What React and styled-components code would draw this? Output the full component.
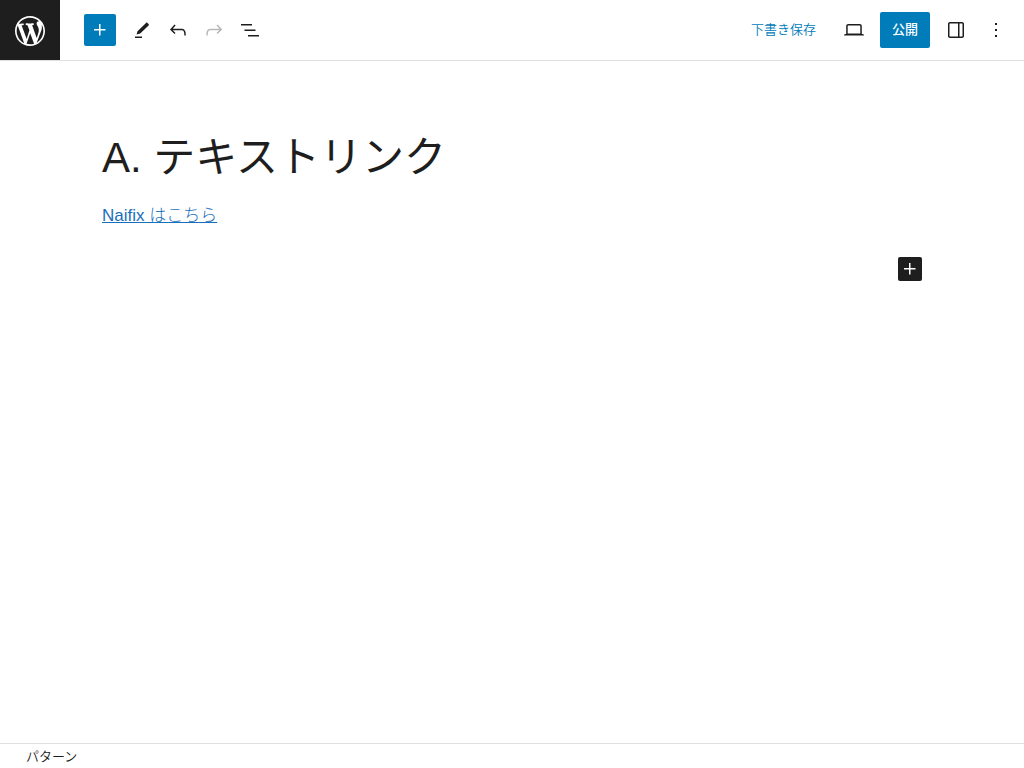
import React, { useState } from "react";
import styled, { createGlobalStyle } from "styled-components";

const ICONS = {
  plus: "M11 12.5V17.5H12.5V12.5H17.5V11H12.5V6H11V11H6V12.5H11Z",
  edit: "M16 4.9c.4-.4 1-.4 1.4 0l1.2 1.2c.4.4.4 1 0 1.4L10.2 15.6 6.6 16.6l.9-3.4L16 4.9zM5 18.5h7V20H5v-1.5z",
  undo: "M18.3 11.7c-.6-.6-1.4-.9-2.3-.9H6.7l2.9-3.3-1.1-1-4.5 5L8.5 16l1-1-2.7-2.7H16c.5 0 .9.2 1.3.5 1 1 1 3.4 1 4.5v.3h1.5v-.2c0-1.5 0-4.3-1.5-5.7z",
  redo: "M15.6 6.5l-1.1 1 2.9 3.3H8c-.9 0-1.7.3-2.3.9-1.4 1.5-1.4 4.2-1.4 5.6v.2h1.5v-.3c0-1.1 0-3.5 1-4.5.3-.3.7-.5 1.3-.5h9.2L14.5 15l1.1 1.1 4.6-4.6-4.6-5z",
  list: "M3 6h11v1.5H3V6Zm3.5 5.5h11V13h-11v-1.5ZM21 17H10v1.5h11V17Z",
  desktop:
    "M20.5 16h-.7V8c0-1.1-.9-2-2-2H6.2c-1.1 0-2 .9-2 2v8h-.7c-.8 0-1.5.7-1.5 1.5h20c0-.8-.7-1.5-1.5-1.5zM5.7 8c0-.3.2-.5.5-.5h11.6c.3 0 .5.2.5.5v7.6H5.7V8z",
  drawer:
    "M18 4H6c-1.1 0-2 .9-2 2v12c0 1.1.9 2 2 2h12c1.1 0 2-.9 2-2V6c0-1.1-.9-2-2-2zm-4 14.5H6c-.3 0-.5-.2-.5-.5V6c0-.3.2-.5.5-.5h8v13zm4.5-.5c0 .3-.2.5-.5.5h-2.5v-13H18c.3 0 .5.2.5.5v12z",
  more: "M13 19h-2v-2h2v2zm0-6h-2v-2h2v2zm0-6h-2V5h2v2z",
};

const WP_LOGO =
  "M20 10c0-5.51-4.49-10-10-10C4.48 0 0 4.49 0 10c0 5.52 4.48 10 10 10 5.51 0 10-4.48 10-10zM7.78 15.37L4.37 6.22c.55-.02 1.17-.08 1.17-.08.5-.06.44-1.13-.06-1.11 0 0-1.45.11-2.37.11-.18 0-.37 0-.58-.01C4.12 2.69 6.87 1.11 10 1.11c2.33 0 4.45.87 6.05 2.34-.68-.11-1.65.39-1.65 1.58 0 .74.45 1.36.9 2.1.35.61.55 1.36.55 2.46 0 1.49-1.4 5-1.4 5l-3.03-8.37c.54-.02.82-.17.82-.17.5-.05.44-1.25-.06-1.22 0 0-1.44.12-2.38.12-.87 0-2.33-.12-2.33-.12-.5-.03-.56 1.2-.06 1.22l.92.08 1.26 3.41zM17.41 10c.24-.64.74-1.87.43-4.25.7 1.29 1.05 2.71 1.05 4.25 0 3.29-1.73 6.24-4.4 7.78.97-2.59 1.94-5.2 2.92-7.78zM6.1 18.09C3.12 16.65 1.11 13.53 1.11 10c0-1.3.23-2.48.72-3.59C3.25 10.3 4.67 14.2 6.1 18.09zm4.03-6.63l2.58 6.98c-.86.29-1.76.45-2.71.45-.79 0-1.57-.11-2.29-.33.81-2.38 1.62-4.74 2.42-7.1z";

function Icon({ name }) {
  return (
    <svg width="24" height="24" viewBox="0 0 24 24" fill="currentColor" aria-hidden="true">
      <path d={ICONS[name]} />
    </svg>
  );
}

function App() {
  const [sidebar, setSidebar] = useState(false);

  return (
    <Editor>
      <GlobalStyle />
      <Header>
        <HomeLink href="#" aria-label="投稿を表示">
          <svg width="36" height="36" viewBox="-2 -2 24 24" fill="currentColor" aria-hidden="true">
            <path d={WP_LOGO} />
          </svg>
        </HomeLink>
        <DocumentTools>
          <InserterButton aria-label="ブロック挿入ツールを切り替え">
            <Icon name="plus" />
          </InserterButton>
          <ToolGroup>
            <IconButton aria-label="ツール">
              <Icon name="edit" />
            </IconButton>
            <IconButton aria-label="元に戻す">
              <Icon name="undo" />
            </IconButton>
            <IconButton aria-label="やり直す" disabled>
              <Icon name="redo" />
            </IconButton>
            <IconButton aria-label="リスト表示">
              <Icon name="list" />
            </IconButton>
          </ToolGroup>
        </DocumentTools>
        <Settings>
          <TextButton>下書き保存</TextButton>
          <IconButton aria-label="プレビュー">
            <Icon name="desktop" />
          </IconButton>
          <TextButton $primary>公開</TextButton>
          <MenuGroup>
            <IconButton
              aria-label="設定"
              aria-pressed={sidebar}
              onClick={() => setSidebar(!sidebar)}
            >
              <Icon name="drawer" />
            </IconButton>
            <IconButton aria-label="オプション">
              <Icon name="more" />
            </IconButton>
          </MenuGroup>
        </Settings>
      </Header>
      <Canvas>
        <Post>
          <PostTitle>A. テキストリンク</PostTitle>
          <Paragraph>
            <a href="#">Naifix はこちら</a>
          </Paragraph>
          <AppenderRow>
            <Appender aria-label="ブロックを追加">
              <Icon name="plus" />
            </Appender>
          </AppenderRow>
        </Post>
      </Canvas>
      <Footer>パターン</Footer>
    </Editor>
  );
}

export default App;

const GlobalStyle = createGlobalStyle`
  * {
    box-sizing: border-box;
  }
  body {
    margin: 0;
    background: #fff;
    color: #1e1e1e;
    font-family: "Liberation Sans", "Noto Sans CJK JP", sans-serif;
    font-size: 13px;
  }
  button {
    padding: 0;
    border: 0;
    background: none;
    color: inherit;
    font: inherit;
    cursor: pointer;
  }
  svg {
    display: block;
  }
`;

const Editor = styled.div`
  display: flex;
  flex-direction: column;
  min-height: 100vh;
`;

const Header = styled.header`
  display: flex;
  align-items: center;
  border-bottom: 1px solid #e0e0e0;
`;

const HomeLink = styled.a`
  display: flex;
  align-items: center;
  justify-content: center;
  width: 60px;
  height: 60px;
  padding-top: 2px;
  background: #1e1e1e;
  color: #fff;
`;

const DocumentTools = styled.div`
  display: flex;
  align-items: center;
  gap: 8px;
  padding-left: 24px;
`;

const ToolGroup = styled.div`
  display: flex;
`;

const IconButton = styled.button`
  display: flex;
  align-items: center;
  justify-content: center;
  width: 36px;
  height: 36px;

  &:disabled {
    color: #b8b8b8;
    cursor: default;
  }
`;

const InserterButton = styled(IconButton)`
  width: 32px;
  height: 32px;
  border-radius: 2px;
  background: #007cba;
  color: #fff;
`;

const Settings = styled.div`
  display: flex;
  align-items: center;
  gap: 8px;
  margin-left: auto;
  padding-right: 10px;
`;

const MenuGroup = styled.div`
  display: flex;
  gap: 4px;
`;

const TextButton = styled.button`
  height: 36px;
  padding: 0 12px 4px;
  border-radius: 2px;
  background: ${({ $primary }) => ($primary ? "#007cba" : "none")};
  color: ${({ $primary }) => ($primary ? "#fff" : "#007cba")};
  font-weight: ${({ $primary }) => ($primary ? 500 : 350)};
`;

const Canvas = styled.main`
  flex: 1;
  padding: 69px 24px 0;
`;

const Post = styled.article`
  max-width: 820px;
  margin: 0 auto;
`;

const PostTitle = styled.h1`
  margin: 0;
  font-size: 42px;
  font-weight: 400;
  line-height: 56px;
`;

const Paragraph = styled.p`
  margin: 16px 0 27px;
  font-size: 17px;
  font-weight: 300;
  line-height: 28px;

  a {
    color: #1a6fba;
  }
`;

const AppenderRow = styled.div`
  display: flex;
  justify-content: flex-end;
`;

const Appender = styled.button`
  width: 24px;
  height: 24px;
  border-radius: 2px;
  background: #1e1e1e;
  color: #fff;
`;

const Footer = styled.footer`
  height: 26px;
  padding: 0 26px;
  border-top: 1px solid #e0e0e0;
  font-weight: 350;
  line-height: 25px;
  margin-bottom: -1px;
`;
